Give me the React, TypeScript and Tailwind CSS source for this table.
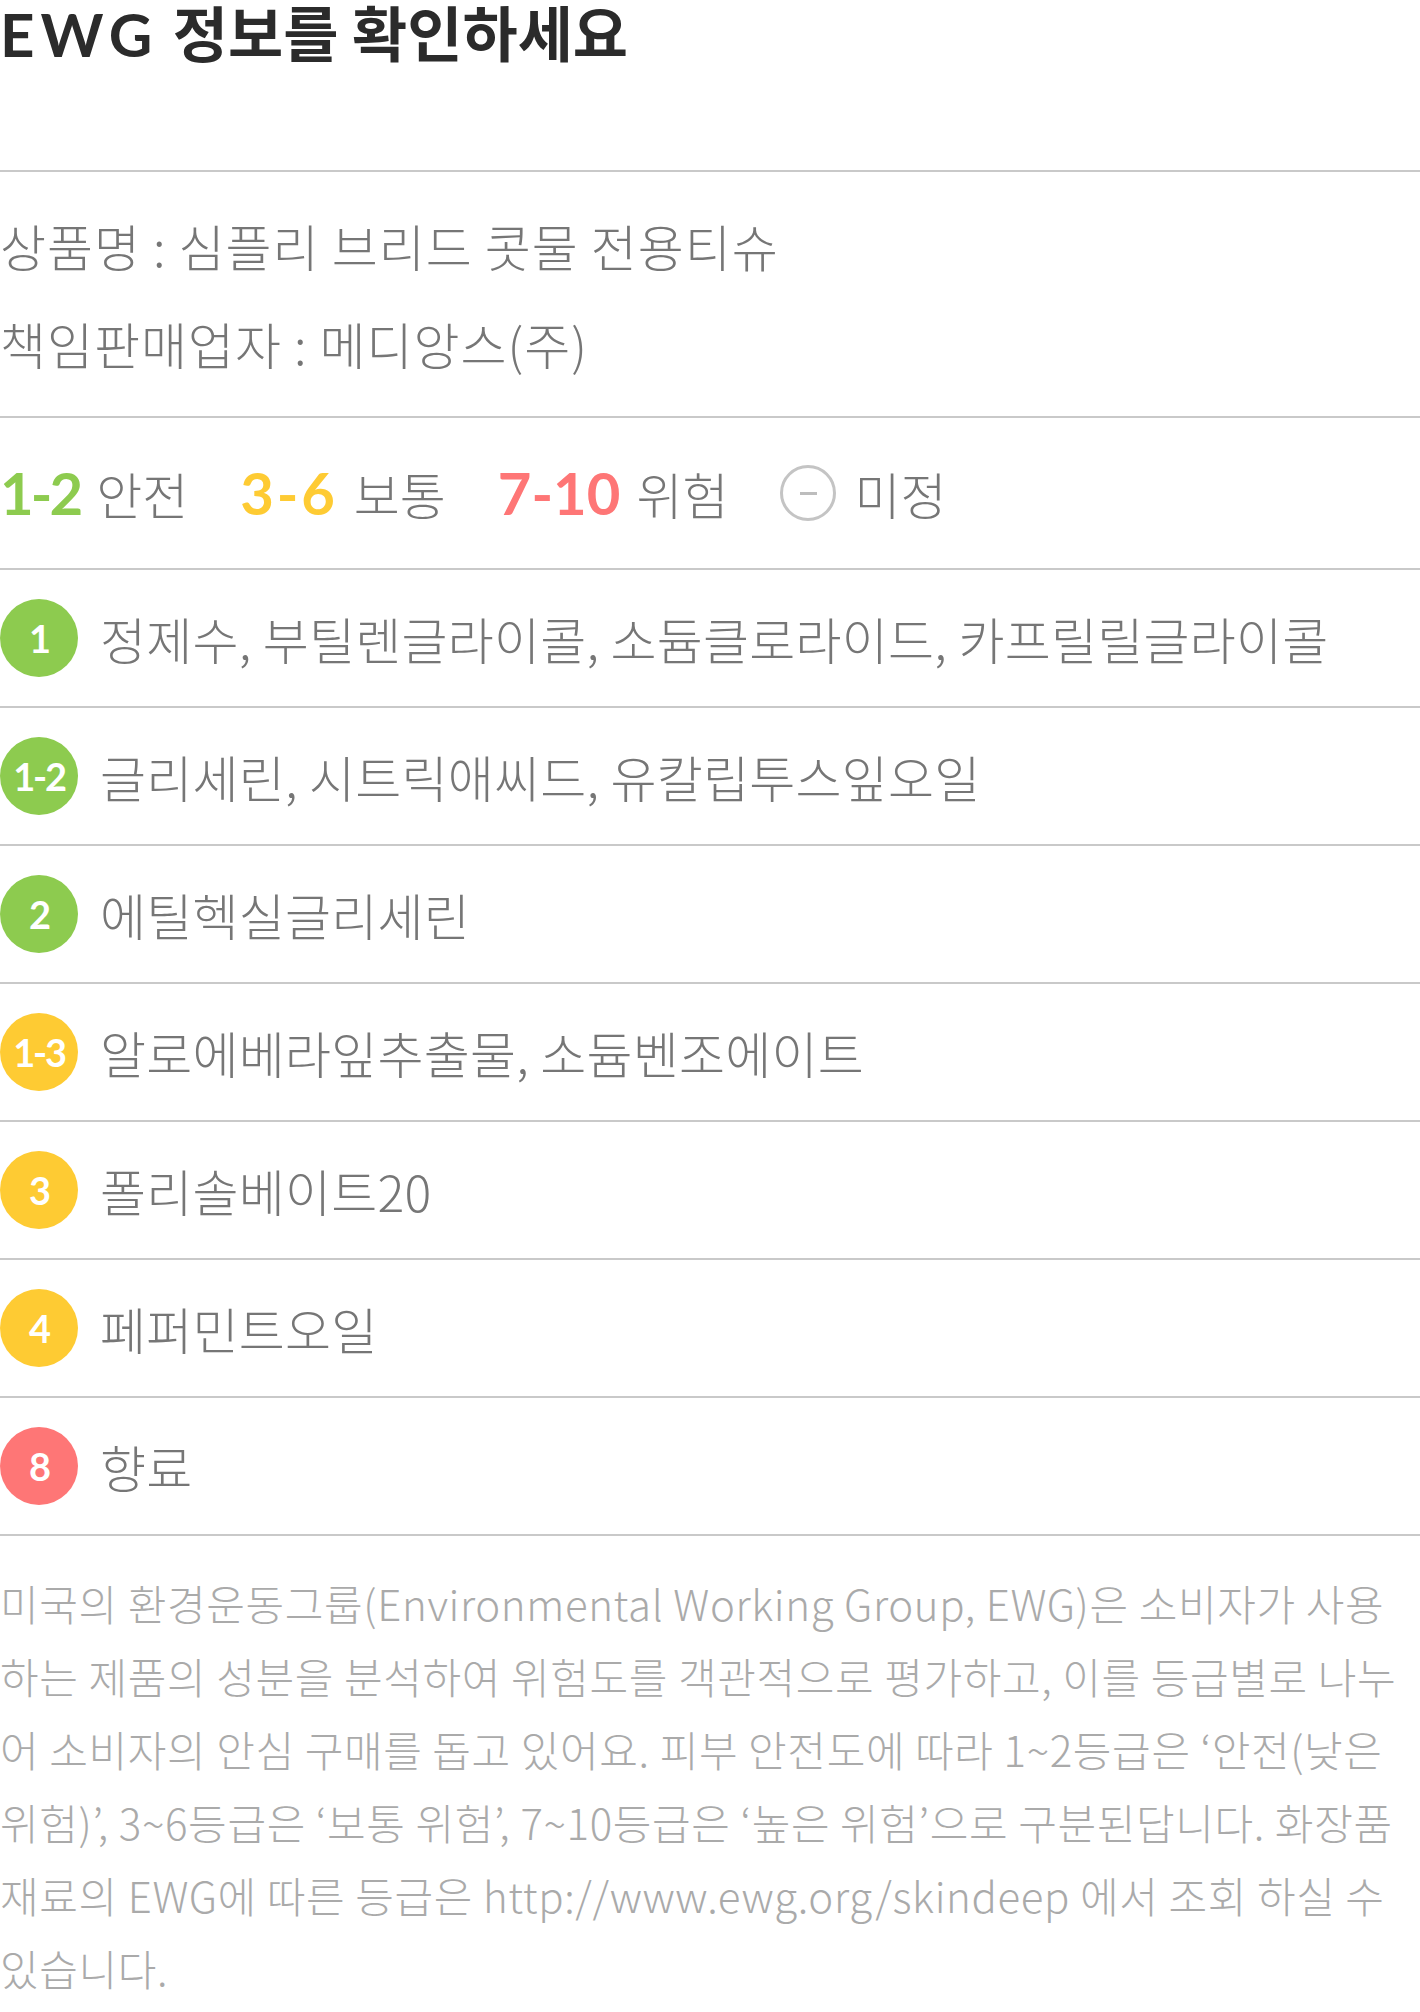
import React from "react";

const KR = "font-['Noto_Sans_CJK_KR',sans-serif]";
const NUM = "font-['Lato','Noto_Sans_CJK_KR',sans-serif]";

const GREEN = "bg-[#8dcb4f]";
const YELLOW = "bg-[#fecb33]";
const RED = "bg-[#fe7676]";

const ingredients = [
  { grade: "1", color: GREEN, name: "정제수, 부틸렌글라이콜, 소듐클로라이드, 카프릴릴글라이콜" },
  { grade: "1-2", color: GREEN, name: "글리세린, 시트릭애씨드, 유칼립투스잎오일" },
  { grade: "2", color: GREEN, name: "에틸헥실글리세린" },
  { grade: "1-3", color: YELLOW, name: "알로에베라잎추출물, 소듐벤조에이트" },
  { grade: "3", color: YELLOW, name: "폴리솔베이트20" },
  { grade: "4", color: YELLOW, name: "페퍼민트오일" },
  { grade: "8", color: RED, name: "향료" },
];

const notice = [
  "미국의 환경운동그룹(Environmental Working Group, EWG)은 소비자가 사용",
  "하는 제품의 성분을 분석하여 위험도를 객관적으로 평가하고, 이를 등급별로 나누",
  "어 소비자의 안심 구매를 돕고 있어요. 피부 안전도에 따라 1~2등급은 ‘안전(낮은",
  "위험)’, 3~6등급은 ‘보통 위험’, 7~10등급은 ‘높은 위험’으로 구분된답니다. 화장품",
  "재료의 EWG에 따른 등급은 http://www.ewg.org/skindeep 에서 조회 하실 수",
  "있습니다.",
];

function LegendItem({
  range,
  label,
  color,
}: {
  range: string;
  label: string;
  color: string;
}) {
  return (
    <div className="flex items-center gap-4">
      <span className={`${NUM} text-[58px] font-bold leading-none ${color}`}>{range}</span>
      <span className="text-[50px] font-light leading-none text-[#767676]">{label}</span>
    </div>
  );
}

export default function App() {
  return (
    <div className={`${KR} w-[1420px] bg-white`}>
      {/* title */}
      <div className="h-[172px] border-b-2 border-[#c9c9c9] pt-px">
        <h1 className={`${NUM} text-[60px] font-bold leading-none text-[#2b2b2b]`}>
          <span className="tracking-[0.1em]">EWG</span> <span className={KR}>정보를 확인하세요</span>
        </h1>
      </div>

      {/* product info */}
      <div className="h-[246px] border-b-2 border-[#c9c9c9] py-6 text-[50px] font-light leading-[98px] tracking-[0.02em] text-[#767676]">
        <p>상품명 : 심플리 브리드 콧물 전용티슈</p>
        <p>책임판매업자 : 메디앙스(주)</p>
      </div>

      {/* legend */}
      <div className="flex h-[152px] items-center gap-[52px] border-b-2 border-[#c9c9c9]">
        <LegendItem range="1-2" label="안전" color="tracking-[-0.05em] text-[#8dcb4f]" />
        <LegendItem range="3-6" label="보통" color="tracking-[0.05em] text-[#fecb33]" />
        <LegendItem range="7-10" label="위험" color="text-[#fe7676]" />
        <div className="flex items-center gap-[18px]">
          <span className="flex h-[56px] w-[56px] items-center justify-center rounded-full border-[3px] border-[#c4c4c4]">
            <span className="h-[3px] w-[17px] bg-[#bdbdbd]" />
          </span>
          <span className="text-[50px] font-light leading-none text-[#767676]">미정</span>
        </div>
      </div>

      {/* ingredients */}
      {ingredients.map((item) => (
        <div key={item.name} className="flex h-[138px] items-center gap-[22px] border-b-2 border-[#c9c9c9]">
          <span
            className={`${NUM} flex h-[78px] w-[78px] shrink-0 items-center justify-center rounded-full text-[38px] font-bold leading-none tracking-[-0.06em] text-white ${item.color}`}
          >
            {item.grade}
          </span>
          <span className="whitespace-nowrap text-[50px] font-light leading-none tracking-[0.005em] text-[#767676]">
            {item.name}
          </span>
        </div>
      ))}

      {/* notice */}
      <div className="pt-[30px] text-[42px] font-light leading-[73px] tracking-[0.015em] text-[#aaaaaa]">
        {notice.map((line) => (
          <p key={line} className="whitespace-nowrap">
            {line}
          </p>
        ))}
      </div>
    </div>
  );
}
